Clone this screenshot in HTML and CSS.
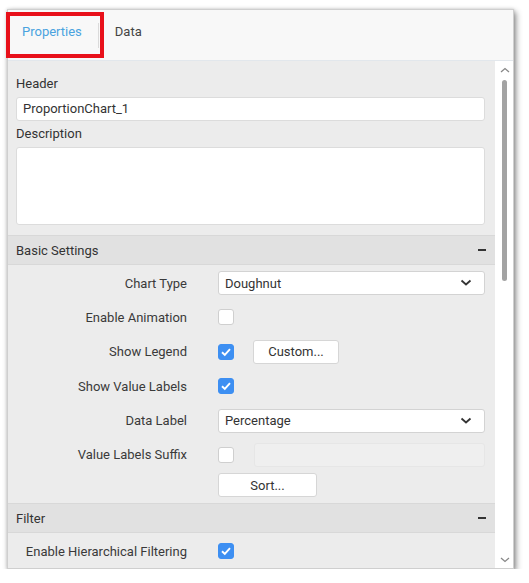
FILE: index.html
```html
<!DOCTYPE html>
<html>
<head>
<meta charset="utf-8">
<link rel="stylesheet" href="styles.css">
</head>
<body>
<div class="panel">
  <div class="tabs">
    <div class="tab active"><span class="tab-text">Properties</span></div>
    <div class="tab"><span class="tab-text">Data</span></div>
    <div class="highlight"></div>
  </div>
  <div class="body">
    <div class="content">
      <div class="general">
        <div class="field-label">Header</div>
        <div class="input">ProportionChart_1</div>
        <div class="field-label">Description</div>
        <div class="textarea"></div>
      </div>

      <div class="section-head"><span>Basic Settings</span><span class="minus"></span></div>
      <div class="section">
        <div class="row">
          <div class="label">Chart Type</div>
          <div class="control">
            <div class="select"><span>Doughnut</span>
              <svg class="chev" width="12" height="8" viewBox="0 0 12 8"><polyline points="1.5,1.5 6,5.5 10.5,1.5" fill="none" stroke="#333" stroke-width="1.8"/></svg>
            </div>
          </div>
        </div>
        <div class="row">
          <div class="label">Enable Animation</div>
          <div class="control"><span class="check"></span></div>
        </div>
        <div class="row">
          <div class="label">Show Legend</div>
          <div class="control">
            <span class="check on"><svg width="16" height="16" viewBox="0 0 16 16"><polyline points="4,8.3 6.8,11 12,5.2" fill="none" stroke="#fff" stroke-width="1.9"/></svg></span>
            <div class="button custom">Custom...</div>
          </div>
        </div>
        <div class="row">
          <div class="label">Show Value Labels</div>
          <div class="control">
            <span class="check on"><svg width="16" height="16" viewBox="0 0 16 16"><polyline points="4,8.3 6.8,11 12,5.2" fill="none" stroke="#fff" stroke-width="1.9"/></svg></span>
          </div>
        </div>
        <div class="row">
          <div class="label">Data Label</div>
          <div class="control">
            <div class="select"><span>Percentage</span>
              <svg class="chev" width="12" height="8" viewBox="0 0 12 8"><polyline points="1.5,1.5 6,5.5 10.5,1.5" fill="none" stroke="#333" stroke-width="1.8"/></svg>
            </div>
          </div>
        </div>
        <div class="row">
          <div class="label">Value Labels Suffix</div>
          <div class="control">
            <span class="check"></span>
            <div class="disabled-input"></div>
          </div>
        </div>
        <div class="row sort-row">
          <div class="label"></div>
          <div class="control"><div class="button sort">Sort...</div></div>
        </div>
      </div>

      <div class="section-head"><span>Filter</span><span class="minus"></span></div>
      <div class="section">
        <div class="row">
          <div class="label">Enable Hierarchical Filtering</div>
          <div class="control">
            <span class="check on"><svg width="16" height="16" viewBox="0 0 16 16"><polyline points="4,8.3 6.8,11 12,5.2" fill="none" stroke="#fff" stroke-width="1.9"/></svg></span>
          </div>
        </div>
      </div>
    </div>
    <div class="scrollbar">
      <svg class="arrow" width="10" height="6" viewBox="0 0 10 6"><polyline points="1,5 5,1.5 9,5" fill="none" stroke="#888" stroke-width="1.3"/></svg>
      <div class="track"><div class="thumb"></div></div>
      <svg class="arrow" width="10" height="6" viewBox="0 0 10 6"><polyline points="1,1 5,4.5 9,1" fill="none" stroke="#888" stroke-width="1.3"/></svg>
    </div>
  </div>
</div>
</body>
</html>
```
FILE: styles.css
```css
* { box-sizing: border-box; }
html, body { margin: 0; padding: 0; background: #fff; }
body {
  font-family: Roboto, "Liberation Sans", Arial, sans-serif;
  font-size: 13px;
  color: #333;
}
.panel {
  position: relative;
  margin: 9px 0 0 7px;
  width: 507px;
  height: 560px;
  border: 1px solid #cfcfcf;
  box-shadow: 2px 3px 6px rgba(0,0,0,0.45), 0 0 3px rgba(0,0,0,0.15);
  display: flex;
  flex-direction: column;
  background: #ececec;
}
.tabs {
  position: relative;
  height: 51px;
  flex: none;
  background: #f8f8f8;
  border-bottom: 1px solid #e2e7ec;
  display: flex;
  align-items: flex-start;
  padding-top: 13px;
}
.tab {
  height: 25px;
  display: flex;
  align-items: flex-start;
}
.tab-text { color: #444; line-height: 17px; }
.tab.active {
  padding: 0 16px 0 14px;
  border-right: 1px solid #dadada;
}
.tab.active .tab-text { color: #4aa3df; }
.tab + .tab { padding-left: 16px; }
.highlight {
  position: absolute;
  left: -2px;
  top: 2px;
  width: 98px;
  height: 46px;
  border: 4px solid #e8101a;
}
.body {
  flex: 1;
  display: flex;
  min-height: 0;
}
.content {
  flex: 1;
  overflow: hidden;
}
.general {
  padding: 14px 10px 10px 8px;
}
.field-label {
  height: 18px;
  line-height: 18px;
  margin-bottom: 4px;
}
.input {
  height: 24px;
  background: #fff;
  border: 1px solid #dcdcdc;
  border-radius: 3px;
  padding: 0 6px;
  line-height: 22px;
  margin-bottom: 4px;
}
.textarea {
  height: 78px;
  background: #fff;
  border: 1px solid #dcdcdc;
  border-radius: 3px;
}
.section-head {
  height: 30px;
  background: #e1e1e1;
  border-top: 1px solid #d8d8d8;
  border-bottom: 1px solid #d8d8d8;
  display: flex;
  align-items: center;
  justify-content: space-between;
  padding: 0 9px 0 8px;
}
.minus {
  width: 8px;
  height: 2px;
  background: #333;
}
.section {
  padding: 6px 10px 6px 0;
  display: flex;
  flex-direction: column;
  gap: 10.4px;
}
.row {
  display: grid;
  grid-template-columns: 179px 1fr;
  column-gap: 31px;
  height: 24px;
  align-items: center;
}
.sort-row { margin-top: -4px; }
.label {
  text-align: right;
  white-space: nowrap;
  color: #3a3a3a;
}
.control {
  display: flex;
  align-items: center;
  height: 24px;
}
.select {
  flex: 1;
  height: 24px;
  background: #fff;
  border: 1px solid #d3d3d3;
  border-radius: 3px;
  padding: 0 12px 0 6px;
  display: flex;
  align-items: center;
  justify-content: space-between;
}
.check {
  width: 16px;
  height: 16px;
  flex: none;
  background: #fff;
  border: 1px solid #cfcfcf;
  border-radius: 3px;
  display: flex;
  position: relative;
}
.check.on {
  background: #3d8ff2;
  border-color: #3d8ff2;
}
.check svg { position: absolute; left: -1px; top: -1px; }
.button {
  height: 24px;
  background: #fff;
  border: 1px solid #d6d6d6;
  border-radius: 3px;
  display: flex;
  align-items: center;
  justify-content: center;
  color: #333;
}
.custom { width: 86px; margin-left: 19px; }
.sort { width: 99px; }
.disabled-input {
  flex: 1;
  height: 24px;
  margin-left: 20px;
  background: #efefef;
  border: 1px solid #e6e6e6;
  border-radius: 3px;
}
.scrollbar {
  width: 18px;
  flex: none;
  background: #fff;
  display: flex;
  flex-direction: column;
  align-items: center;
  padding: 6px 0 5px;
}
.arrow { flex: none; margin-left: 1px; }
.track {
  flex: 1;
  width: 100%;
  padding-top: 7px;
  display: flex;
  justify-content: center;
}
.thumb {
  width: 5px;
  height: 201px;
  margin-left: 1px;
  background: #a3a3a3;
  border-radius: 3px;
}
```
